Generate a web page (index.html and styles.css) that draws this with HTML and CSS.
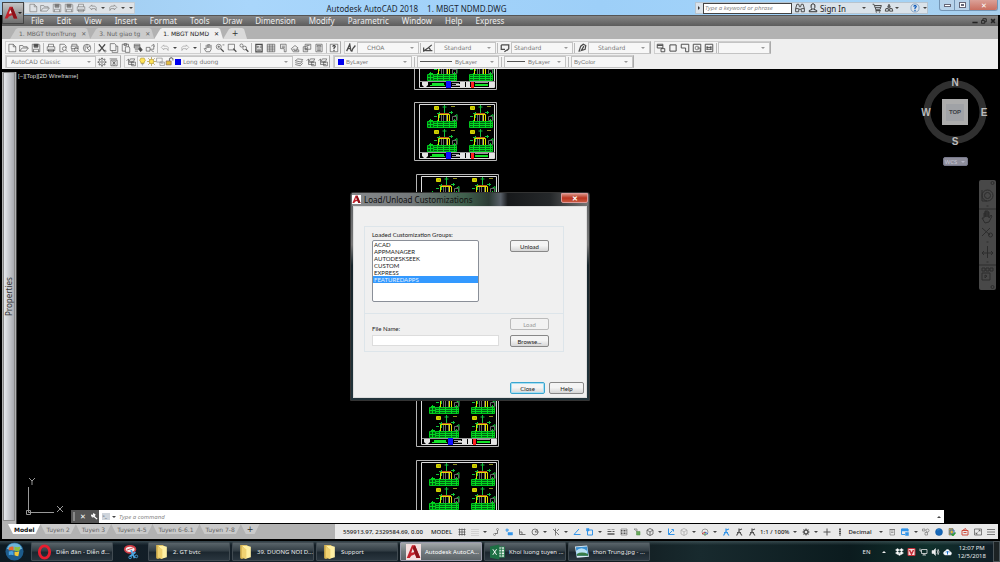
FILE: index.html
```
<!DOCTYPE html>
<html lang="en">
<head>
<meta charset="utf-8">
<title>Autodesk AutoCAD 2018 - 1. MBGT NDMD.DWG</title>
<link rel="stylesheet" href="styles.css">
</head>
<body>
<svg class="sprite" aria-hidden="true">
  <defs>
    <symbol id="new" viewBox="0 0 16 16"><path d="M3 2h7l4 4v8H3z M10 2v4h4"/></symbol>
    <symbol id="open" viewBox="0 0 16 16"><path d="M1 13V4h5l1 2h6v2 M1 13l4-5h10l-4 5z"/></symbol>
    <symbol id="save" viewBox="0 0 16 16"><path d="M2 2h11l1 1v11H2z M5 2v5h6V2 M4 14v-4h8v4" /><path class="f" d="M5 2h6v4H5z"/></symbol>
    <symbol id="print" viewBox="0 0 16 16"><path d="M4 6V2h8v4 M2 6h12v6H2z M4 10h8v4H4z"/></symbol>
    <symbol id="preview" viewBox="0 0 16 16"><path d="M9 14H3V2h7l3 3v3"/><circle cx="10" cy="9" r="3"/><path d="M12 11l3 3"/></symbol>
    <symbol id="publish" viewBox="0 0 16 16"><path d="M3 5V2h8v3 M2 5h11v4H2z M3 9v4h5"/><circle cx="10" cy="10" r="3"/><path d="M12 12l3 3"/></symbol>
    <symbol id="globe" viewBox="0 0 16 16"><circle cx="8" cy="8" r="6"/><path d="M8 2v6l4 4 M8 8l5-3 M5 4v8"/></symbol>
    <symbol id="cut" viewBox="0 0 16 16"><path stroke-width="2" d="M3 2l9 11 M13 2L4 13"/><circle cx="3" cy="13" r="1.5"/><circle cx="13" cy="13" r="1.5"/></symbol>
    <symbol id="copy" viewBox="0 0 16 16"><path d="M2 1h7l2 2v9H2z M5 12v3h9V5h-3"/></symbol>
    <symbol id="paste" viewBox="0 0 16 16"><path d="M7 13H2V2h10v4 M5 1h4v3H5z M7 6h6l1 2v7H7z"/></symbol>
    <symbol id="match" viewBox="0 0 16 16"><path d="M2 2h9v6H2z M2 4h9 M2 6h9 M3 10h7 M3 13h5"/><path class="f" d="M9 9l3-2 3 4-3 3z"/></symbol>
    <symbol id="block" viewBox="0 0 16 16"><path d="M2 7h6v6H2z M8 10h6V4 M10 5l4-3 1 4 M10 12l4 2"/></symbol>
    <symbol id="undo" viewBox="0 0 16 16"><path d="M6 3L2 7l4 4V9h5l2 3V7l-2-2H6z"/></symbol>
    <symbol id="redo" viewBox="0 0 16 16"><path d="M10 3l4 4-4 4V9H5l-2 3V7l2-2h5z"/></symbol>
    <symbol id="hand" viewBox="0 0 16 16"><path d="M5 14L2 9l1-1 2 2V4l1-1 1 1 1-2 1 1 1-1 1 2 1-1 1 1v6l-2 4z M7 4v4 M9 3v5 M11 4v4"/></symbol>
    <symbol id="zoom" viewBox="0 0 16 16"><circle cx="6" cy="6" r="4"/><path stroke-width="2" d="M9 9l5 5"/><path d="M6 4v4 M4 6h4 M12 3h3"/></symbol>
    <symbol id="zoomwin" viewBox="0 0 16 16"><path d="M2 2h10v9H2z"/><path stroke-width="2" d="M10 9l5 5"/></symbol>
    <symbol id="zoomprev" viewBox="0 0 16 16"><circle cx="4" cy="4" r="2.5"/><circle cx="9" cy="8" r="3"/><path stroke-width="2" d="M11 10l4 4"/></symbol>
    <symbol id="props" viewBox="0 0 16 16"><path stroke-width="2" d="M3 2h10v12H3z"/><path d="M5 5h2v2H5z M9 5h3 M9 7h3 M5 10h6 M5 12h6"/></symbol>
    <symbol id="gridp" viewBox="0 0 16 16"><path d="M2 2h12v12H2z M2 5h12 M2 8h12 M2 11h12 M6 2v12 M10 2v12"/></symbol>
    <symbol id="palette" viewBox="0 0 16 16"><path d="M4 2h9v12h-3V9H4z M6 5h5 M6 7h5"/></symbol>
    <symbol id="sheets" viewBox="0 0 16 16"><path d="M2 9l6-5 5 4-3 2 4 1v3H5z M4 10h5 M6 12h6"/></symbol>
    <symbol id="markup" viewBox="0 0 16 16"><path d="M5 2h9v8H5z M2 6h7v8H2z M7 4h5 M4 9h4 M4 11h4"/></symbol>
    <symbol id="calc" viewBox="0 0 16 16"><path d="M3 2h10v12H3z M5 4h6v2H5z M5 8h6 M5 10h6 M5 12h6"/></symbol>
    <symbol id="help" viewBox="0 0 16 16"><path d="M2 2h12v12H2z"/><path stroke-width="2" d="M6 6l1-2h2l1 2-2 2v2 M8 11v2"/></symbol>
    <symbol id="textstyle" viewBox="0 0 16 16"><path stroke-width="2" d="M1 13L6 2l2 11 M3 9h5 M9 14l2-5 4-5"/></symbol>
    <symbol id="dimstyle" viewBox="0 0 16 16"><path stroke-width="2" d="M1 13l7-5 6-5 M1 7v7 M4 12h11 M9 7l3 4"/></symbol>
    <symbol id="tablestyle" viewBox="0 0 16 16"><path stroke-width="2" d="M2 3h12v6l-3 3 M2 3v7h6 M7 14l4-3"/></symbol>
    <symbol id="leader" viewBox="0 0 16 16"><path stroke-width="2" d="M3 14L6 5l4-3 4 2-1 6-6 2 4-7"/></symbol>
    <symbol id="vp2" viewBox="0 0 16 16"><path stroke-width="1.5" d="M2 2h9v6H2z M2 4h9 M8 9h6v5H8z"/></symbol>
    <symbol id="vp3" viewBox="0 0 16 16"><path stroke-width="1.6" d="M3 3h10v10H3z"/></symbol>
    <symbol id="vp4" viewBox="0 0 16 16"><path stroke-width="1.5" d="M2 2h12v12h-5V8H2z"/></symbol>
    <symbol id="vp5" viewBox="0 0 16 16"><path stroke-width="1.5" d="M2 2h12v12H2z"/><circle cx="8" cy="8" r="3"/><path d="M8 8h5v5"/></symbol>
    <symbol id="vp6" viewBox="0 0 16 16"><path stroke-width="1.5" d="M2 2h12v12H2z M5 5v6 M11 5v6 M4 7h8 M4 10h8"/></symbol>
    <symbol id="gear" viewBox="0 0 16 16"><circle cx="8" cy="8" r="5"/><circle cx="8" cy="8" r="2"/><path stroke-width="2" d="M8 1v2 M8 13v2 M1 8h2 M13 8h2 M3 3l1 1 M12 12l1 1 M13 3l-1 1 M3 13l1-1"/></symbol>
    <symbol id="gearf" viewBox="0 0 16 16"><circle cx="8" cy="8" r="4" stroke-width="3"/><path stroke-width="2" d="M8 1v3 M8 12v3 M1 8h3 M12 8h3 M3 3l2 2 M11 11l2 2 M13 3l-2 2 M3 13l2-2"/></symbol>
    <symbol id="wsave" viewBox="0 0 16 16"><path d="M1 3h12 M3 5h10v9H3z M5 7l6 5 M11 7l-6 5 M8 6v8"/></symbol>
    <symbol id="layers" viewBox="0 0 16 16"><path d="M2 6l4-3 8 1-3 4z M2 9l8 2 4-4 M2 12l8 2 4-4"/></symbol>
    <symbol id="layp" viewBox="0 0 16 16"><path d="M7 3h7l-2 4H5z M5 9h8 M4 12h9 M9 8h6v6H9z M1 6l3-3v9"/></symbol>
    <symbol id="bulb" viewBox="0 0 16 16"><path fill="#ffe45a" stroke="#a78a18" d="M5 9L3 6l2-4h6l2 4-2 3v2H5z"/><path stroke="#555" d="M6 12h4 M7 14h2"/></symbol>
    <symbol id="sun" viewBox="0 0 16 16"><path stroke="#987c20" d="M8 0v16 M0 8h16 M2 2l12 12 M14 2L2 14"/><circle cx="8" cy="8" r="4" fill="#ffe45a" stroke="#a78a18"/></symbol>
    <symbol id="freeze" viewBox="0 0 16 16"><path d="M1 2h10v7H1z M7 9h8v6H7z M9 11h4"/></symbol>
    <symbol id="lock" viewBox="0 0 16 16"><path fill="#e2bf42" stroke="#755" d="M2 7h9v7H2z"/><path stroke-width="2" d="M8 7V3l3-2 3 2v3"/></symbol>
    <symbol id="binoc" viewBox="0 0 16 16"><path stroke-width="1.5" d="M3 2h3l1 4h2l1-4h3l2 7v5h-5v-4H6v4H1V9z M1 9h5 M10 9h5"/></symbol>
    <symbol id="user" viewBox="0 0 16 16"><path stroke-width="1.5" d="M8 1l3 2v4l-2 3 5 2v2H2v-2l5-2-2-3V3z"/></symbol>
    <symbol id="cart" viewBox="0 0 16 16"><path stroke-width="1.5" d="M1 2h2l3 8h7l2-6H4 M5 7h9 M6 10v2h8"/><circle cx="7" cy="14" r="1"/><circle cx="12" cy="14" r="1"/></symbol>
    <symbol id="app" viewBox="0 0 16 16"><path stroke-width="1.5" d="M8 2l2 4H6z M3 9h4v4H2z M9 9h4l1 4H9z M5 9l3-3 3 3"/></symbol>
    <symbol id="ask" viewBox="0 0 16 16"><circle cx="8" cy="8" r="6.5"/><path stroke="#1560bd" stroke-width="2" d="M6 6l1-2h2l1 2-2 2v2 M8 11v2"/></symbol>
    <symbol id="wrench" viewBox="0 0 16 16"><path stroke-width="3" d="M7 8l7 6"/><path stroke-width="2.5" d="M6 2L5 6 1 5l2 4 4-1 2-4z"/></symbol>
    <symbol id="grid" viewBox="0 0 16 16"><path stroke-width="1.5" d="M3 1v14 M8 1v14 M13 1v14 M1 3h14 M1 8h14 M1 13h14"/></symbol>
    <symbol id="snap" viewBox="0 0 16 16"><path stroke-dasharray="2 2" stroke-width="1.6" d="M1 3h14 M1 7h14 M1 11h14 M1 15h14"/></symbol>
    <symbol id="infer" viewBox="0 0 16 16"><circle cx="11" cy="3" r="2"/><path stroke-width="1.5" d="M11 5v6H6"/><circle cx="5" cy="13" r="2"/></symbol>
    <symbol id="dyn" viewBox="0 0 16 16"><path stroke-width="2" d="M4 1v7 M1 4h7"/><path class="f" d="M6 9h9v5H6z"/></symbol>
    <symbol id="ortho" viewBox="0 0 16 16"><path stroke-width="1.6" d="M3 2v11h12 M3 8h5v5"/></symbol>
    <symbol id="polar" viewBox="0 0 16 16"><circle cx="8" cy="8" r="6" stroke-width="1.5"/><path stroke-width="1.5" d="M8 8h7 M8 8l4-5"/></symbol>
    <symbol id="iso" viewBox="0 0 16 16"><path stroke-width="1.5" d="M2 2l12 12 M7 1v14 M10 6l4-4"/></symbol>
    <symbol id="angle" viewBox="0 0 16 16"><path stroke-width="2" d="M12 2L2 13h13"/></symbol>
    <symbol id="osnap" viewBox="0 0 16 16"><path stroke-width="2" d="M3 4h10v10H3z"/><path class="f" d="M1 1h5v5H1z"/></symbol>
    <symbol id="lwt" viewBox="0 0 16 16"><path d="M1 3h6 M9 3h6"/><path stroke-width="2" d="M1 7h8 M11 7h4"/><path stroke-width="3" d="M1 12h14"/></symbol>
    <symbol id="trans" viewBox="0 0 16 16"><path d="M2 2h12v12H2z"/><path stroke-dasharray="2 1" stroke-width="2" d="M2 5h12 M2 8h12 M2 11h12"/></symbol>
    <symbol id="cycle" viewBox="0 0 16 16"><path d="M2 2h6v6 M2 2l6 5"/><path fill="#69a85d" stroke="#4e8f43" d="M7 7h7v7H7z"/></symbol>
    <symbol id="cube" viewBox="0 0 16 16"><path stroke-width="1.5" d="M8 1l6 3v8l-6 3-6-3V4z M2 4l6 4 6-4 M8 8v7"/></symbol>
    <symbol id="ucs" viewBox="0 0 16 16"><path stroke-width="2" d="M3 1v12h12 M3 13l8-8 M9 3h4v4"/></symbol>
    <symbol id="gizmo" viewBox="0 0 16 16"><circle cx="8" cy="8" r="6"/><path stroke="#3b8f3e" stroke-width="2" d="M8 8v7"/><path stroke="#c33" stroke-width="2" d="M8 8L2 12"/><path stroke="#36c" stroke-width="2" d="M8 8l6 4"/></symbol>
    <symbol id="person" viewBox="0 0 16 16"><path stroke-width="2.4" d="M8 1v6L3 15 M8 7l6 8 M4 9h8 M9 4l5-2"/></symbol>
    <symbol id="plus" viewBox="0 0 16 16"><path stroke-width="2" d="M8 1v14 M1 8h14"/></symbol>
    <symbol id="ruler" viewBox="0 0 16 16"><path stroke-width="4" stroke-dasharray="3 1" d="M8 1v14"/></symbol>
    <symbol id="quick" viewBox="0 0 16 16"><path d="M4 3h9v11H4z M6 6h5 M6 9h5 M3 3h11"/></symbol>
    <symbol id="lockui" viewBox="0 0 16 16"><path stroke-width="2" d="M1 2h13v5 M1 2v11h7"/><path class="f" d="M1 2h13v4H1z M9 9h6v6H9z"/></symbol>
    <symbol id="isolate" viewBox="0 0 16 16"><path d="M1 2h5v4H1z"/><circle cx="11" cy="5" r="3"/><path d="M6 9h5v5H6z"/></symbol>
    <symbol id="ball" viewBox="0 0 16 16"><circle cx="8" cy="8" r="7" fill="#1667b7" stroke="#0e58a5"/><path stroke="#4da2e6" d="M4 4l5-1"/></symbol>
    <symbol id="lyr" viewBox="0 0 16 16"><path fill="#e8bf3d" stroke="#555" d="M2 1h8v13H2z"/><path stroke="#3568b5" stroke-width="2" d="M4 4h8v8H4z"/><path stroke="#2c9c3b" stroke-width="3" d="M7 12l3 3 5-6"/></symbol>
    <symbol id="tray" viewBox="0 0 16 16"><path stroke="#cf4c3e" stroke-width="2" d="M2 5h12v9H2z M5 9h6 M3 5l6-4 2 4"/></symbol>
    <symbol id="full" viewBox="0 0 16 16"><path stroke-width="1.4" d="M1 2h14v12H1z M9 7l3-3 M9 4h3v3 M7 9l-3 3 M4 9v3h3"/></symbol>
    <symbol id="menu" viewBox="0 0 16 16"><path stroke-width="1.5" d="M0 3h16 M0 8h16 M0 13h16"/></symbol>
    <symbol id="alogo" viewBox="0 0 20 20"><path fill="#c3222c" d="M1 18L8 1h4l7 17h-5l-2-5-5 2-2 3z"/><path fill="#eeeeee" d="M7 11l2-6 3 5z"/><path fill="#8d131b" d="M12 1l7 17h-5L9 5z"/></symbol>
    <symbol id="folder" viewBox="0 0 16 18"><path fill="#d8b552" d="M2 1h8v14l-6 2-2-1z"/><path fill="#fff0a4" d="M4 2h6l4 1v12l-7 2V5z"/><path fill="#f0d271" d="M4 3l5 3v11l-5-2z"/></symbol>
    <g id="elev">
      <path stroke="#d6d600" fill="#8a8a00" d="M.5 1.500h4v3h-4z M2 1.500v3 M.5 3h4"/>
      <path stroke="#8f8f20" d="M17 1.500h4"/>
      <path stroke="#13c13b" d="M10.500 0v9 M8.500 2h4 M3 8.500h5 M5.500 7v6 M15 7.500h4 M17.500 6v3 M0 11.500h3 M20 11.500l3-2v6"/>
      <path stroke="#666" d="M7.500 10v7 M9.500 10v7 M12.500 10v7 M18.500 11.500h4v4h-4z"/>
      <path stroke="#e0e000" d="M4.500 17V9.500h11V17 M13.500 10v7"/>
      <path stroke="#c05a22" d="M6 8.500h9"/>
      <path fill="#005c10" stroke="#00c81c" d="M-.5 16.500h23v6h-23z"/>
      <path stroke="#00d820" d="M0 18.500h23 M0 20.500h23 M3.500 15v8 M9.500 16v7 M15.500 16v7 M20.500 14v9"/>
    </g>
    <g id="wing"><path fill="#005c10" stroke="#00c81c" d="M.5 16.500h6v6h-6z"/><path stroke="#00d820" d="M0 19.500h7 M3.500 14v9 M2 15.500h4"/></g>
    <g id="sheet" fill="none" stroke-width="1">
      <path stroke="#b5b5b5" d="M.5 .5h82v58H.5z"/><path stroke="#dddddd" d="M5.500 2.500h75v54h-75z"/>
      <use href="#wing" x="13" y="3"/><use href="#wing" x="13" y="27"/>
      <use href="#elev" x="20" y="3"/><use href="#elev" x="56" y="3"/>
      <use href="#elev" x="20" y="27"/><use href="#elev" x="56" y="27"/>
      <g stroke="none">
        <path fill="#999" d="M6 50h75v1H6z M38 52h7v1h-7z M38 54h9v1h-9z M61 51h13v1H61z"/>
        <path fill="#e4e4e4" d="M8 51h6v3l-2 2h-2l-2-2z M42 53h4v1h-4z M46 51h5v5h-5z M52 51h4v5h-4z M75 51h5v5h-5z"/>
        <path fill="#15e52a" d="M18 52h12v2H18z M16 54h15v1H16z M61 53h13v2H61z"/>
        <path fill="#1010ff" d="M32 50h5v7h-5z"/><path fill="#ff2020" d="M57 51h3v6h-3z"/>
      </g>
    </g>
  </defs>
</svg>

<div class="app">
  <header class="titlebar">
    <button class="app-button" aria-label="Application menu"><svg class="mark"><use href="#alogo"/></svg><i class="down"></i></button>
    <div class="qat">
      <button aria-label="New"><svg><use href="#new"/></svg></button><button aria-label="Open"><svg><use href="#open"/></svg></button><button aria-label="Save"><svg><use href="#save"/></svg></button><button aria-label="Save as"><svg><use href="#save"/></svg></button><button aria-label="Plot"><svg><use href="#print"/></svg></button><button aria-label="Undo"><svg><use href="#undo"/></svg></button><i class="down"></i><button aria-label="Redo"><svg><use href="#redo"/></svg></button><i class="down"></i><i class="down wide"></i>
    </div>
    <h1 class="title"><span>Autodesk AutoCAD 2018</span><span>1. MBGT NDMD.DWG</span></h1>
    <div class="info">
      <i class="right"></i><input aria-label="Search" placeholder="Type a keyword or phrase">
      <button aria-label="Find"><svg><use href="#binoc"/></svg></button>
      <button class="signin"><svg><use href="#user"/></svg>Sign In</button>
      <i class="down"></i>
      <button aria-label="Store"><svg><use href="#cart"/></svg></button><button aria-label="Apps"><svg><use href="#app"/></svg></button><i class="down"></i>
      <button class="ask" aria-label="Help"><svg><use href="#ask"/></svg></button><i class="down"></i>
    </div>
    <div class="win"><button aria-label="Minimize"><i class="w-min"></i></button><button aria-label="Restore"><i class="w-max"></i></button><button class="w-close" aria-label="Close window">✕</button></div>
  </header>

  <div class="frame">
    <nav class="menubar">
      <button>File</button><button>Edit</button><button>View</button><button>Insert</button><button>Format</button><button>Tools</button><button>Draw</button><button>Dimension</button><button>Modify</button><button>Parametric</button><button>Window</button><button>Help</button><button>Express</button>
      <div class="mdi"><button aria-label="Minimize drawing"><svg viewBox="0 0 16 16"><path stroke-width="4" d="M1 12h14"/></svg></button><button aria-label="Restore drawing"><svg viewBox="0 0 16 16"><path stroke-width="2.500" d="M1 7h9v7H1z M5 7V2h9v8h-4"/></svg></button><button aria-label="Close drawing"><svg viewBox="0 0 16 16"><path stroke-width="4" d="M3 3l10 10 M13 3L3 13"/></svg></button></div>
    </nav>

    <div class="filetabs">
      <button class="ftab">1. MBGT thonTrung<b>✕</b></button><button class="ftab">3. Nut giao tg<b>✕</b></button><button class="ftab on">1. MBGT NDMD<b>✕</b></button><button class="ftab add" aria-label="New drawing">+</button>
    </div>

    <div class="toolbars">
      <div class="bar">
        <div class="group">
          <button aria-label="New"><svg><use href="#new"/></svg></button><button aria-label="Open"><svg><use href="#open"/></svg></button><button aria-label="Save"><svg><use href="#save"/></svg></button><hr>
          <button aria-label="Plot"><svg><use href="#print"/></svg></button><button aria-label="Preview"><svg><use href="#preview"/></svg></button><button aria-label="Publish"><svg><use href="#publish"/></svg></button><button aria-label="3D print"><svg><use href="#globe"/></svg></button><hr>
          <button aria-label="Cut"><svg><use href="#cut"/></svg></button><button aria-label="Copy"><svg><use href="#copy"/></svg></button><button aria-label="Paste"><svg><use href="#paste"/></svg></button><button aria-label="Match"><svg><use href="#match"/></svg></button><button aria-label="Block editor"><svg><use href="#block"/></svg></button><hr>
          <button class="dim" aria-label="Undo"><svg><use href="#undo"/></svg></button><i class="down"></i><button class="dim" aria-label="Redo"><svg><use href="#redo"/></svg></button><i class="down"></i><hr>
          <button aria-label="Pan"><svg><use href="#hand"/></svg></button><button aria-label="Zoom"><svg><use href="#zoom"/></svg></button><button aria-label="Zoom window"><svg><use href="#zoomwin"/></svg></button><button aria-label="Zoom previous"><svg><use href="#zoomprev"/></svg></button><hr>
          <button aria-label="Properties"><svg><use href="#props"/></svg></button><button aria-label="Design center"><svg><use href="#gridp"/></svg></button><button aria-label="Tool palettes"><svg><use href="#palette"/></svg></button><button aria-label="Sheet set"><svg><use href="#sheets"/></svg></button><button aria-label="Markup"><svg><use href="#markup"/></svg></button><button aria-label="Calculator"><svg><use href="#calc"/></svg></button><hr>
          <button aria-label="Help"><svg><use href="#help"/></svg></button>
        </div>
        <div class="group">
          <button aria-label="Text style"><svg><use href="#textstyle"/></svg></button><label class="combo c62 in"><select aria-label="Text style name"><option>CHOA</option></select></label>
          <hr><button aria-label="Dimension style"><svg><use href="#dimstyle"/></svg></button><label class="combo c62 in"><select aria-label="Dimension style name"><option>Standard</option></select></label>
          <hr><button aria-label="Table style"><svg><use href="#tablestyle"/></svg></button><label class="combo c62 tight"><select aria-label="Table style name"><option>Standard</option></select></label>
          <hr><button aria-label="Leader style"><svg><use href="#leader"/></svg></button><label class="combo c62 in"><select aria-label="Leader style name"><option>Standard</option></select></label>
        </div>
        <div class="group">
          <button aria-label="Layout viewports"><svg><use href="#vp2"/></svg></button><button aria-label="Single viewport"><svg><use href="#vp3"/></svg></button><button aria-label="Polygonal viewport"><svg><use href="#vp4"/></svg></button><button aria-label="Object viewport"><svg><use href="#vp5"/></svg></button><button aria-label="Clip viewport"><svg><use href="#vp6"/></svg></button><hr>
          <label class="combo c52"><select aria-label="Viewport scale"><option></option></select></label>
        </div>
      </div>
      <div class="bar">
        <div class="group">
          <label class="combo c90"><select aria-label="Workspace"><option>AutoCAD Classic</option></select></label>
          <button aria-label="Workspace settings"><svg><use href="#gear"/></svg></button><button aria-label="Save workspace"><svg><use href="#wsave"/></svg></button>
        </div>
        <div class="group">
          <button aria-label="Layer properties"><svg><use href="#layp"/></svg></button>
          <label class="combo c156"><svg><use href="#bulb"/></svg><svg><use href="#sun"/></svg><svg><use href="#freeze"/></svg><svg><use href="#lock"/></svg><i class="swatch"></i><select aria-label="Layer"><option>Long duong</option></select></label>
          <button aria-label="Make current"><svg><use href="#layers"/></svg></button><button aria-label="Layer previous"><svg><use href="#layp"/></svg></button><button aria-label="Layer states"><svg><use href="#layp"/></svg></button>
        </div>
        <div class="group by">
          <label class="combo c78"><i class="swatch"></i><select aria-label="Color"><option>ByLayer</option></select></label><hr>
          <label class="combo c82"><i class="line l32"></i><select aria-label="Linetype"><option>ByLayer</option></select></label><hr>
          <label class="combo c62"><i class="line l18"></i><select aria-label="Lineweight"><option>ByLayer</option></select></label><hr>
          <label class="combo c62"><select aria-label="Plot style"><option>ByColor</option></select></label>
        </div>
      </div>
    </div>

    <main class="work">
      <aside class="palette"><span>Properties</span></aside>
      <section class="canvas">
        <svg class="drawing" aria-label="Drawing sheets">
          <use href="#sheet" x="397" y="-38"/><use href="#sheet" x="397" y="33"/><use href="#sheet" x="399" y="105"/><use href="#sheet" x="399" y="319"/><use href="#sheet" x="399" y="391"/>
        </svg>
        <p class="vlabel">[−][Top][2D Wireframe]</p>
        <div class="viewcube">
          <svg viewBox="0 0 78 74">
            <circle cx="39" cy="37" r="28" fill="none" stroke="#303030" stroke-width="7"/>
            <path fill="#acacac" stroke="none" d="M26 24h26v26H26z"/><path fill="#a0a2a6" stroke="none" d="M30 29h18v17H30z"/>
            <text class="top" x="39" y="39">TOP</text>
            <text x="39" y="11">N</text><text x="39" y="70">S</text><text x="10" y="41">W</text><text x="68" y="41">E</text>
          </svg>
          <button class="wcs">WCS<i class="down"></i></button>
        </div>
        <div class="navbar">
          <svg viewBox="0 0 17 110"><circle cx="13.500" cy="3" r="1.500"/><circle cx="8.500" cy="15.500" r="5.500"/><circle cx="8.500" cy="15.500" r="3"/><path d="M3 10v11h5 M7.500 26h2 M0 29h17 M6 43l-3-5h2v-5h1v4-6h1v6-6h2v6-5h1v6l2-3 1 1-3 6z M3 48l8 7 M3 56l8-8 M7.500 62h2 M8.500 66v12 M3 73h11 M5 71l-2 2 2 2 M12 71l2 2-2 2 M7.500 82h2 M0 85h17 M3 88h3v3H3z M7 88h3v3H7z M11 88h3v3h-3z M3 93h8v7H3z M6 95v3l2-2z"/><circle cx="11.500" cy="55" r="2"/><circle cx="13.500" cy="107" r="1.500"/></svg>
        </div>
        <svg class="ucsicon" viewBox="0 0 42 42"><path d="M4.500 12v25.500h25.500 M2.500 35.500h4v4h-4z M5 3l3 3 3-3 M8 6v4 M33 31l6 6 M39 31l-6 6"/></svg>
        <div class="cmd">
          <div class="cmdgrip"><i></i><button aria-label="Close command line">✕</button><button aria-label="Customize"><svg><use href="#wrench"/></svg></button></div>
          <span class="prompt">&gt;_</span><i class="down"></i><input aria-label="Command" placeholder="Type a command"><i class="up"></i>
        </div>

        <div class="dialog" role="dialog" aria-labelledby="dlgtitle">
          <div class="dlghead"><span class="dlgicon"><svg><use href="#alogo"/></svg></span><h2 id="dlgtitle">Load/Unload Customizations</h2><button aria-label="Close dialog">✕</button></div>
          <form class="dlgbody">
            <fieldset>
              <div class="row first">
                <div class="fld"><label for="groups">Loaded Customization Groups:</label>
                  <select id="groups" size="9"><option>ACAD</option><option>APPMANAGER</option><option>AUTODESKSEEK</option><option>CUSTOM</option><option>EXPRESS</option><option class="sel">FEATUREDAPPS</option></select></div>
                <button type="button" class="btn">Unload</button>
              </div>
              <div class="row second">
                <div class="fld"><label for="fname">File Name:</label><input id="fname" type="text"></div>
                <div class="stack"><button type="button" class="btn" disabled>Load</button><button type="button" class="btn">Browse...</button></div>
              </div>
            </fieldset>
            <div class="dlgfoot"><button type="button" class="btn def">Close</button><button type="button" class="btn">Help</button></div>
          </form>
        </div>
      </section>
    </main>

    <footer class="bottom">
      <div class="ltabs"><button class="on">Model</button><button>Tuyen 2</button><button>Tuyen 3</button><button>Tuyen 4-5</button><button>Tuyen 6-6.1</button><button>Tuyen 7-8</button><button class="add">+</button></div>
      <div class="status">
        <span>559913.97, 2329584.69, 0.00</span><button class="txt">MODEL</button>
        <button aria-label="Grid"><svg><use href="#grid"/></svg></button><button class="pale" aria-label="Snap"><svg><use href="#snap"/></svg></button><i class="down"></i>
        <button aria-label="Infer"><svg><use href="#infer"/></svg></button><button class="blue" aria-label="Dynamic input"><svg><use href="#dyn"/></svg></button><button aria-label="Ortho"><svg><use href="#ortho"/></svg></button><button aria-label="Polar"><svg><use href="#polar"/></svg></button><i class="down"></i>
        <button aria-label="Isodraft"><svg><use href="#iso"/></svg></button><i class="down"></i>
        <button class="blue" aria-label="Object tracking"><svg><use href="#angle"/></svg></button><button class="blue" aria-label="Object snap"><svg><use href="#osnap"/></svg></button><i class="down"></i>
        <button aria-label="Lineweight"><svg><use href="#lwt"/></svg></button><button aria-label="Transparency"><svg><use href="#trans"/></svg></button><button aria-label="Cycling"><svg><use href="#cycle"/></svg></button><button aria-label="3D snap"><svg><use href="#cube"/></svg></button><i class="down"></i>
        <button class="blue" aria-label="Dynamic UCS"><svg><use href="#ucs"/></svg></button><button class="pale" aria-label="Filter"><svg><use href="#cube"/></svg></button><i class="down"></i>
        <button aria-label="Gizmo"><svg><use href="#gizmo"/></svg></button><i class="down"></i>
        <button class="blue" aria-label="Annotation visibility"><svg><use href="#person"/></svg></button><button aria-label="Auto scale"><svg><use href="#person"/></svg></button><button aria-label="Annotation scale"><svg><use href="#person"/></svg></button><button class="txt">1:1 / 100%</button><i class="down"></i>
        <button aria-label="Workspace"><svg><use href="#gearf"/></svg></button><i class="down"></i><button aria-label="Monitor"><svg><use href="#plus"/></svg></button><button aria-label="Units"><svg><use href="#ruler"/></svg></button><button class="txt">Decimal</button><i class="down gap"></i>
        <button aria-label="Quick properties"><svg><use href="#quick"/></svg></button><button class="blue" aria-label="Lock UI"><svg><use href="#lockui"/></svg></button><i class="down"></i><button aria-label="Isolate"><svg><use href="#isolate"/></svg></button><button aria-label="Graphics"><svg><use href="#ball"/></svg></button><button aria-label="Layer notice"><svg><use href="#lyr"/></svg></button><button aria-label="Plot notice"><svg><use href="#tray"/></svg></button><button aria-label="Clean screen"><svg><use href="#full"/></svg></button><button aria-label="Customization"><svg><use href="#menu"/></svg></button>
      </div>
    </footer>
  </div>

  <div class="taskbar">
    <button class="start" aria-label="Start"><svg viewBox="0 0 20 20"><circle cx="10" cy="10" r="9.500" fill="#1d5c8c"/><path fill="#6db5da" d="M2 7a8.500 8.500 0 0 1 16 0q-8 4-16 0"/><path fill="#e8662d" d="M4 6q3-2 5-1v4q-2-1-5 0z"/><path fill="#8cc03e" d="M10 5q3 1 6 0l-1 5q-3 0-5-1z"/><path fill="#4aa4e0" d="M4 10q3-1 5 0v4q-3-1-5 0z"/><path fill="#f4c837" d="M10 10q2 1 5 0l-1 5q-2 0-4-1z"/></svg></button>
    <button class="task"><svg viewBox="0 0 16 16"><ellipse cx="8" cy="8" rx="5.500" ry="6.500" fill="none" stroke="#e81c2e" stroke-width="3"/></svg><span>Diễn đàn - Diễn đ...</span></button>
    <button class="pin" aria-label="Snipping Tool"><svg viewBox="0 0 18 18"><ellipse cx="8" cy="6" rx="6" ry="4" fill="#f7efef" stroke="#d13d45" stroke-width="2"/><path stroke="#d13d45" d="M4 7l8-3"/><path stroke="#4aa4e0" stroke-width="2" d="M9 7l4 9 M14 9l-6 5"/><circle cx="8" cy="15" r="1.500" fill="none" stroke="#4aa4e0"/><circle cx="15" cy="14" r="1.500" fill="none" stroke="#4aa4e0"/></svg></button>
    <button class="task"><svg><use href="#folder"/></svg><span>2. GT bvtc</span></button>
    <button class="task"><svg><use href="#folder"/></svg><span>39. DUONG NOI D...</span></button>
    <button class="task"><svg><use href="#folder"/></svg><span>Support</span></button>
    <button class="task now"><svg class="acad"><use href="#alogo"/></svg><span>Autodesk AutoCA...</span></button>
    <button class="task"><svg viewBox="0 0 16 16"><path fill="#eef5ef" stroke="#1d7044" d="M8 2.500h7.500v11H8z"/><path stroke="#1d7044" d="M8 5h7 M8 8h7 M8 11h7 M12 3v10"/><path fill="#1d7044" d="M0 2l10-2v16L0 14z"/><path stroke="#fff" stroke-width="1.600" d="M3 5l4 6 M7 5l-4 6"/></svg><span>Khoi luong tuyen ...</span></button>
    <button class="task"><svg viewBox="0 0 16 16"><path fill="#dcecf7" d="M1 2l13-1 2 12-13 1z"/><path fill="#3b90d1" d="M2 3l12-1 1 10H3z"/><path fill="#b8e0f4" d="M2 7q6-6 12 0v3H3z"/><path fill="#397b46" d="M3 10q5-3 12 0v2H3z"/></svg><span>thon Trung.jpg - ...</span></button>
    <div class="systray">
      <span class="lang">EN</span><i class="up"></i>
      <svg viewBox="0 0 16 16"><path fill="#fff" d="M4 1l4 3-4 3-4-3z M12 1l4 3-4 3-4-3z M4 7l4 3-4 3-4-3z M12 7l4 3-4 3-4-3z M8 11l3 2-3 2-3-2z"/></svg>
      <svg viewBox="0 0 16 16"><path fill="#f7dede" stroke="#c22e38" stroke-width="2" d="M1 1h14v14H1z"/><path stroke="#c22e38" stroke-width="3" d="M4 4l4 8 4-8"/></svg>
      <svg viewBox="0 0 16 16"><path stroke="#eee" stroke-width="1.500" d="M4 3h11v8H4z M1 1v5h3 M9 11v3 M6 14h7"/></svg>
      <svg viewBox="0 0 16 16"><path fill="#eee" d="M1 5h3l4-4v14l-4-4H1z"/><path stroke="#eee" stroke-width="1.500" d="M11 4q3 4 0 8 M13 2q4 6 0 12"/></svg>
      <svg viewBox="0 0 16 16"><path fill="#f5faff" d="M3 14q-3-1-3-4 0-3 4-4 1-4 5-3 3 1 3 4 4 0 4 4 0 2-2 3z"/><path stroke="#1d73c9" stroke-width="2" d="M8 13V7 M5 9l3-3 3 3"/></svg>
      <div class="clock"><span>12:07 PM</span><span>12/5/2018</span></div>
    </div>
    <button class="desk" aria-label="Show desktop"></button>
  </div>
</div>
</body>
</html>
```
FILE: styles.css
```
* { box-sizing: border-box; }
body { margin: 0; background: #000; font-family: "Noto Sans", sans-serif; font-size: 6px; color: #333; overflow: hidden; }
button { border: 0; padding: 0; margin: 0; background: none; font: inherit; color: inherit; display: flex; align-items: center; justify-content: center; flex: none; white-space: nowrap; }
input, select { font: inherit; border: 0; padding: 0; margin: 0; outline: 0; min-width: 0; color: inherit; }
h1, h2, p { margin: 0; font-weight: normal; }
svg { fill: none; stroke: currentColor; stroke-width: 1; flex: none; width: 10px; height: 10px; }
svg .f { fill: currentColor; }
.sprite { position: absolute; width: 0; height: 0; }
#alogo path, #folder path, svg text { stroke: none; }

.down, .up, .right { flex: none; width: 0; height: 0; border: 2px solid transparent; }
.down { border-top-color: #444; border-bottom: 0; }
.up { border-bottom-color: #444; border-top: 0; }
.right { border-left-color: #333; border-right: 0; }

.app { display: flex; flex-direction: column; height: 100vh; }

/* title bar */
.titlebar { position: relative; display: flex; align-items: center; height: 15px; padding: 0 2px 0 24px; background: linear-gradient(90deg, #9fc9ea, #a9d6fb 25%, #9dcff8 60%, #a5d5fa 85%, #a8cfec); flex: none; }
.app-button { position: absolute; left: 2px; top: 2px; width: 22px; height: 22px; background: linear-gradient(#c5c5c5, #6f6f6f); border: 1px solid #444; z-index: 2; }
.app-button .mark { width: 14px; height: 16px; }
.app-button .down { border-width: 2px 2px 0; border-top-color: #222; }
.qat { display: flex; align-items: center; height: 12px; width: 111px; margin-top: 1px; padding-left: 2px; background: #dfe3e7; border: 1px solid #c3ccd4; color: #777; }
.qat button { width: 12px; }
.qat .down { margin: 0 2px; }
.title { flex: 1; display: flex; justify-content: center; gap: 9px; font-size: 8px; line-height: 12px; color: #1c2833; margin-top: 2px; padding-left: 3px; }
.info { display: flex; align-items: center; height: 12px; width: 233px; background: #dbe3ea; border: 1px solid #b7c4cf; color: #444; padding-left: 2px; margin-top: 1px; }
.info input { width: 94px; height: 11px; margin: 0 2px 0 3px; padding-left: 1px; background: #fff; border: 1px solid #444; font-style: italic; }
.info input::placeholder, .cmd input::placeholder { color: #888; opacity: 1; }
.info button { width: 12px; }
.info .signin { width: 42px; font-size: 8px; gap: 2px; color: #222; }
.info .signin + .down { margin: 0 5px 0 14px; }
.info .ask { margin-left: 8px; width: 16px; color: #5f87b2; }
.win { display: flex; height: 11px; margin: 0 0 4px 11px; width: 59px; border: 1px solid #7495b4; border-top: 0; border-radius: 0 0 3px 3px; background: #b9d3ea; overflow: hidden; }
.win button { flex: 1; border-right: 1px solid #7495b4; }
.win .w-close { flex: 0 0 27px; background: linear-gradient(#dba198, #c96f60); color: #fff; border: 0; font-size: 7px; }
.w-min { width: 7px; height: 3px; background: #fff; border: 1px solid #667; }
.w-max { width: 7px; height: 6px; background: #667; border: 2px solid #fff; outline: 1px solid #667; outline-offset: -1px; }

.frame { flex: 1; min-height: 0; display: flex; flex-direction: column; margin: 0 2px; }

/* menu */
.menubar { display: flex; align-items: center; gap: 13px; height: 11px; padding-left: 29px; background: linear-gradient(#858585, #5c5c5c); border-top: 1px solid #555; color: #eee; font-size: 8px; line-height: 10px; flex: none; }
.mdi { display: flex; gap: 3px; margin-left: auto; padding-right: 2px; color: #222; }
.mdi svg { width: 6px; height: 6px; }

/* drawing tabs */
.filetabs { display: flex; align-items: flex-end; height: 13px; padding-left: 8px; background: #b2b2b2; font-family: "DejaVu Sans", sans-serif; flex: none; }
.ftab { height: 11px; padding: 0 4px 0 9px; gap: 5px; background: #cbcbcb; color: #666; clip-path: polygon(0 100%, 6px 10%, 8px 0, calc(100% - 5px) 0, calc(100% - 3px) 10%, 100% 100%); }
.ftab b { font-size: 6px; font-weight: normal; }
.ftab.on { background: #f0f0f0; color: #222; }
.ftab.add { width: 24px; padding: 0; color: #333; font-size: 8px; background: #dadada; }

/* toolbars */
.toolbars { display: flex; flex-direction: column; gap: 1px; padding: 2px 3px 1px; background: #efefef; font-family: "DejaVu Sans", sans-serif; color: #777; flex: none; }
.bar { display: flex; height: 13px; gap: 3px; }
.group { display: flex; align-items: center; background: #f4f4f4; border: 1px solid #cfcfcf; border-right-color: #aaa; }
.group > button { width: 12px; color: #4b4b4b; }
.group > .dim { color: #999; }
.group > .down { margin: 0 2px; }
.group hr { width: 1px; height: 10px; margin: 0 1px; border: 0; background: #bbb; flex: none; }
.combo { display: flex; align-items: center; height: 12px; padding: 0 4px; background: #f7f7f7; border: 1px solid #c4c4c4; }
.combo select { flex: 1; appearance: none; background: none; height: 10px; }
.combo::after { content: ""; border: 2px solid transparent; border-top-color: #999; border-bottom: 0; }
.combo.in { padding-left: 9px; }
.combo.tight { padding-left: 2px; }
.combo svg { width: 9px; height: 9px; }
.c52 { width: 52px; } .c62 { width: 62px; } .c78 { width: 78px; } .c82 { width: 82px; } .c90 { width: 90px; } .c156 { width: 156px; padding-left: 0; }
.swatch { width: 6px; height: 6px; background: #00e; margin: 0 2px 0 1px; }
.line { height: 1px; background: #555; margin-right: 3px; } .l32 { width: 32px; } .l18 { width: 18px; }
.by { font-family: "Liberation Sans", sans-serif; }
.by .combo { padding: 0 4px 0 2px; }
.group.by hr { margin: 0 2px; }

/* work area */
.work { flex: 1; min-height: 0; display: flex; }
.palette { width: 15px; flex: none; margin: 3px 0 0; padding: 0 1px 3px; background: #b2b2b2; display: flex; border-right: 1px solid #444; }
.palette span { flex: 1; display: flex; align-items: center; justify-content: center; writing-mode: vertical-rl; transform: rotate(180deg); background: linear-gradient(270deg, #e6e8ec, #a9abb0); border: 1px solid #888; font-size: 8px; line-height: 10px; color: #333; }
.canvas { position: relative; flex: 1; background: #000; overflow: hidden; }
.drawing { position: absolute; inset: 0; width: 100%; height: 100%; }
.vlabel { position: absolute; left: 1px; top: 3px; color: #ddd; font-family: "Liberation Sans", sans-serif; line-height: 8px; }
.viewcube { position: absolute; right: 4px; top: 6px; width: 78px; display: flex; flex-direction: column; align-items: center; gap: 8px; }
.viewcube svg { width: 78px; height: 74px; }
.viewcube text { fill: #bcbcbc; font: bold 10px "Liberation Sans", sans-serif; text-anchor: middle; }
.viewcube .top { fill: #3a3d44; font-size: 6px; }
.wcs { width: 25px; height: 9px; border: 1px solid #77788a; border-radius: 2px; background: #8e8e9c; color: #c5c5d2; gap: 4px; }
.wcs .down { border-top-color: #b5b5c5; }
.navbar { position: absolute; right: 2px; top: 111px; width: 17px; height: 110px; background: #484848; border-radius: 2px; }
.navbar svg { width: 17px; height: 110px; stroke: #2c2c2c; }
.ucsicon { position: absolute; left: 7px; bottom: 7px; width: 42px; height: 42px; stroke: #999; }

.cmd { position: absolute; left: 54px; right: 54px; bottom: 1px; height: 13px; display: flex; align-items: center; background: #fff; padding-right: 3px; }
.cmdgrip { display: flex; align-items: center; align-self: stretch; gap: 5px; width: 28px; background: #555; color: #fff; padding-left: 2px; margin-right: 3px; font-size: 7px; }
.cmdgrip i { width: 2px; height: 9px; background: #888; }
.cmdgrip svg { width: 7px; height: 7px; }
.prompt { width: 8px; height: 7px; line-height: 6px; font-size: 5px; background: #cfd5dc; color: #456; margin-right: 2px; }
.cmd input { flex: 1; background: none; font-style: italic; margin-left: 3px; height: 10px; }

/* dialog */
.dialog { position: absolute; left: 333px; top: 123px; width: 240px; height: 209px; display: flex; flex-direction: column; padding: 0 2px 2px; background: linear-gradient(#5c6063, #777 25%, #16242a 35%, #22343b); border: 1px solid #333; border-radius: 3px 3px 0 0; color: #222; font-family: Lato, sans-serif; }
.dlghead { display: flex; align-items: center; height: 13px; gap: 3px; background: linear-gradient(90deg, #86898b, #74787a 25%, #3f5f4c 48%, #2b3a34 58%, #596069 63%, #17191b 66%, #25282a 84%, #777); flex: none; margin: 0 -1px; }
.dlgicon { display: flex; width: 9px; height: 9px; background: #fff; } .dlgicon svg { width: 9px; height: 9px; }
.dlghead h2 { flex: 1; font: 8px "Noto Sans", sans-serif; color: #111; }
.dlghead button { width: 27px; height: 10px; margin-bottom: 3px; border: 1px solid #d99; border-radius: 0 0 2px 2px; background: linear-gradient(#d98c7d, #b93420 50%, #c9563d); color: #fff; font-size: 7px; font-weight: bold; }
.dlgbody { flex: 1; background: #f0f0f0; border: 1px solid #ddd; padding: 19px 2px 3px 10px; display: flex; flex-direction: column; }
.dlgbody fieldset { margin: 0 20px 0 0; padding: 0; border: 1px solid #dde5ea; min-width: 0; }
.row { display: flex; align-items: flex-start; gap: 31px; padding: 4px 0 0 7px; }
.first { height: 86px; } .first .btn { margin-top: 9px; }
.second { height: 38px; border-top: 1px solid #dde5ea; gap: 11px; }
.fld { display: flex; flex-direction: column; gap: 1px; }
.fld label { line-height: 8px; }
.fld select { width: 107px; height: 62px; background: #fff; border: 1px solid #8a8f98; overflow: hidden; }
.fld option { padding: 0 1px; min-height: 0; height: 7px; line-height: 7px; color: #222; }
.fld .sel { background: #39f; color: #e4f0ff; }
.fld input { width: 127px; height: 11px; background: #fff; border: 1px solid #ddd; }
.second label { margin-top: 7px; } .second .fld { gap: 2px; }
.stack { display: flex; flex-direction: column; gap: 5px; }
.btn { width: 39px; height: 12px; border: 1px solid #888; border-radius: 2px; background: linear-gradient(#f4f4f4 45%, #d6d6d6); color: #222; }
.btn:disabled { border-color: #bbb; background: #f2f2f2; color: #999; }
.btn.def { border-color: #3aa5cf; box-shadow: inset 0 0 0 1px #a6dff3; }
.dlgfoot { display: flex; justify-content: flex-end; gap: 4px; margin-top: auto; } .dlgfoot .btn { width: 35px; }

/* layout tabs and status bar */
.bottom { display: flex; align-items: flex-start; height: 15px; background: #b2b2b2; flex: none; margin-bottom: 2px; }
.ltabs { display: flex; width: 333px; padding-left: 6px; font-family: "DejaVu Sans", sans-serif; color: #666; flex: none; }
.ltabs button { height: 10px; padding: 0 6px; background: #cacaca; clip-path: polygon(0 0, 100% 0, calc(100% - 5px) 100%, 5px 100%); }
.ltabs .on { background: #fff; color: #111; font-weight: bold; }
.ltabs .add { color: #333; font-size: 8px; }
.status { flex: 1; min-width: 0; display: flex; align-items: center; height: 15px; padding-left: 8px; background: #e9e9e9; color: #222; font-weight: 500; white-space: nowrap; }
.status button { width: 13px; color: #555; }
.status .txt { width: auto; color: #222; margin: 0 2px; }
.status span + .txt { margin: 0 3px 0 8px; }
.status svg { width: 8px; height: 8px; }
.status .blue { color: #3394e8; } .status .pale { color: #aaa; }
.status .down { margin: 0 2px; }
.status .gap { margin: 0 3px 0 5px; }

/* taskbar */
.taskbar { display: flex; align-items: center; height: 21px; gap: 2px; background: linear-gradient(rgba(90,110,115,.5), transparent 20%), linear-gradient(90deg, #0d1a22, #152029 20%, #10191d 60%, #182a2e 70%, #0b1b1e 85%, #10302c 93%, #101b25); color: #e8eaec; flex: none; }
.start { width: 29px; } .start svg { width: 19px; height: 19px; stroke: none; }
.task { width: 82px; height: 19px; justify-content: flex-start; gap: 4px; padding-left: 5px; border: 1px solid #414b52; border-radius: 1px; background: linear-gradient(#59646a, #333e45 45%, #1c272f 55%, #2a363f); }
.task svg { width: 15px; height: 16px; stroke-width: 0; }
.task svg [stroke] { stroke-width: 1; } .task svg ellipse[stroke] { stroke-width: 3; }
.now { background: linear-gradient(#a2a7a9, #737a7d 50%, #5d6569); border-color: #99a; }
.now span { color: #fff; }
.task .acad { background: #f3dfdf; }
.pin { width: 31px; } .pin svg { width: 16px; height: 16px; }
.systray { display: flex; align-items: center; gap: 3px; margin-left: auto; padding-right: 5px; }
.systray svg { width: 9px; height: 8px; }
.systray .up { border-bottom-color: #eee; margin: 0 6px 0 8px; }
.clock { display: flex; flex-direction: column; align-items: center; line-height: 8px; margin-left: 3px; }
.desk { width: 7px; height: 21px; border: 1px solid #4a5358; background: #1c2224; }
```
